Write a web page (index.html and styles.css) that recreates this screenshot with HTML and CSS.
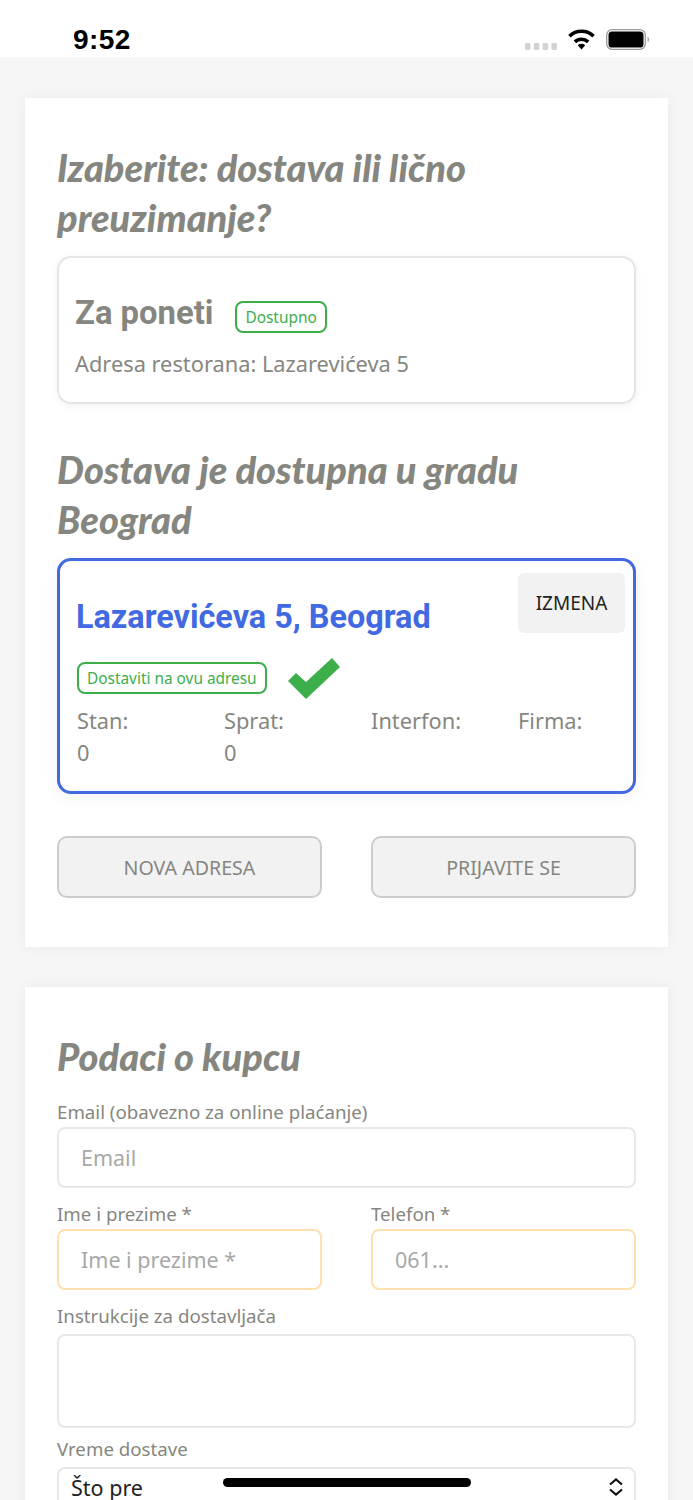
FILE: index.html
```html
<!DOCTYPE html>
<html lang="sr">
<head>
  <meta charset="UTF-8">
  <meta name="viewport" content="width=device-width,initial-scale=1">
  <title>Porudžbina</title>
  <link rel="stylesheet" href="styles.css">
</head>
<body>

  <!-- Status bar -->
  <div class="status">
    <span class="time">9:52</span>
    <div class="status-icons">
      <svg class="signal" width="32" height="7" viewBox="0 0 32 7"><rect x="0" y="0" width="5.500" height="7" rx="1.400"/><rect x="8.800" y="0" width="5.500" height="7" rx="1.400"/><rect x="17.600" y="0" width="5.500" height="7" rx="1.400"/><rect x="26.400" y="0" width="5.500" height="7" rx="1.400"/></svg>
      <svg class="wifi" width="27" height="21" viewBox="0 0 27 21"><path d="M13.500 20.500 9.800 16.200a5.500 5.500 0 0 1 7.400 0z"/><path d="M6.900 12.900a9.600 9.600 0 0 1 13.200 0" fill="none" stroke="#000" stroke-width="3.600"/><path d="M1.500 7.200a17 17 0 0 1 24 0" fill="none" stroke="#000" stroke-width="3.600"/></svg>
      <svg class="battery" width="44" height="21" viewBox="0 0 44 21"><rect x=".7" y=".7" width="38.600" height="19.600" rx="5.500" fill="#fff" stroke="#999" stroke-width="1.300"/><rect x="2.500" y="2.500" width="35" height="16" rx="3.600" fill="#000"/><path d="M41.500 7.500a3.500 3.500 0 0 1 0 6z" fill="#aaa"/></svg>
    </div>
  </div>

  <main class="page">

    <section class="panel">
      <h2>Izaberite: dostava ili lično preuzimanje?</h2>

      <div class="pickup">
        <div class="pickup-head">
          <h3>Za poneti</h3>
          <span class="tag">Dostupno</span>
        </div>
        <p>Adresa restorana: Lazarevićeva 5</p>
      </div>

      <h2 class="second">Dostava je dostupna u gradu Beograd</h2>

      <div class="address">
        <button class="edit">IZMENA</button>
        <h3>Lazarevićeva 5, Beograd</h3>
        <div class="address-tag">
          <span class="tag">Dostaviti na ovu adresu</span>
          <svg class="check" width="52" height="41" viewBox="0 0 52 41"><path d="M0 23 8 15 18 24 44 0 52 9 18 41z"/></svg>
        </div>
        <div class="details">
          <div>Stan:<br>0</div>
          <div>Sprat:<br>0</div>
          <div>Interfon:</div>
          <div>Firma:</div>
        </div>
      </div>

      <div class="actions">
        <button>NOVA ADRESA</button>
        <button>PRIJAVITE SE</button>
      </div>
    </section>

    <section class="panel buyer">
      <h2>Podaci o kupcu</h2>

      <label class="first">Email (obavezno za online plaćanje)</label>
      <input class="field" placeholder="Email">

      <div class="two">
        <div>
          <label>Ime i prezime *</label>
          <input class="field required" placeholder="Ime i prezime *">
        </div>
        <div>
          <label>Telefon *</label>
          <input class="field required" placeholder="061...">
        </div>
      </div>

      <label class="note-label">Instrukcije za dostavljača</label>
      <textarea class="field note"></textarea>

      <label class="time-label">Vreme dostave</label>
      <div class="field select">
        <span>Što pre</span>
        <svg width="16" height="18" viewBox="0 0 16 18"><path d="M2 6.500 8 1.500 14 6.500M2 11.500 8 16.500 14 11.500" fill="none" stroke="#111" stroke-width="2.200"/></svg>
      </div>
    </section>

  </main>

  <div class="home-bar"></div>

</body>
</html>
```

FILE: styles.css
```css
*{margin:0;padding:0;box-sizing:border-box;}
html,body{
  height:1500px;
  overflow:hidden;
}
body{
  position:relative;
  background:#f6f6f6;
  font-family:"Noto Sans",sans-serif;
  color:#868680;
}

/* Status bar */
.status{
  height:57px; background:#fff;
  display:flex; align-items:flex-start; justify-content:space-between;
  padding:0 43px 0 73px;
}
.time{
  font-family:"Liberation Sans",sans-serif;
  font-size:28px; font-weight:bold; line-height:28px;
  color:#000; margin-top:26px; letter-spacing:.4px;
}
.status-icons{display:flex; align-items:flex-start; margin-top:29px;}
.signal{fill:#d2d2d2; margin:14px 11px 0 0;}
.wifi{margin-right:11px;}

.page{padding:41px 25px 0;}

.panel{
  background:#fff;
  padding:44px 32px 49px;
  margin-bottom:40px;
  box-shadow:0 0 12px rgba(0,0,0,.05);
}

h2{
  font-family:Lato,sans-serif;
  font-size:38px; line-height:50px;
  font-style:italic; font-weight:900;
  color:#868680;
}
h2.second{margin-top:40px;}

/* Za poneti */
.pickup{
  height:148px; margin-top:14px;
  padding:39px 16px 0;
  border:2px solid #e6e6e6; border-radius:14px;
  box-shadow:0 2px 8px rgba(0,0,0,.05);
}
.pickup-head{display:flex; align-items:flex-end; gap:22px; height:36px;}
.pickup-head h3{
  font-family:Roboto,sans-serif;
  font-size:32.800px; font-weight:700; color:#868680; line-height:32px;
  align-self:flex-start;
}
.pickup p{font-size:21.800px; line-height:32px; margin-top:15px;}

.tag{
  display:inline-block; height:32px; padding:0 8px;
  border:2px solid #3cae4a; border-radius:8px;
  font-size:15.400px; line-height:29px; color:#3cae4a;
  white-space:nowrap;
}

/* Adresa */
.address{
  position:relative;
  height:236px; margin-top:14px;
  padding:0 17px;
  border:3px solid #4169e1; border-radius:14px;
  box-shadow:0 4px 16px rgba(0,0,0,.05);
}
.address h3{
  font-family:Roboto,sans-serif;
  font-size:32.400px; font-weight:700; line-height:40px;
  color:#4169e1; padding-top:36px; margin-left:-1px;
  white-space:nowrap;
}
.edit{
  position:absolute; top:12px; right:8px;
  width:107px; height:60px;
  background:#f2f2f2; border:none; border-radius:6px;
  font:19px "Noto Sans",sans-serif; color:#222;
}
.address-tag{display:flex; align-items:center; gap:21px; margin-top:21px; height:40px;}
.details{
  display:grid; grid-template-columns:repeat(4,147px);
  font-size:21.800px; line-height:32px; margin-top:7px;
}

.actions{display:grid; grid-template-columns:265px 265px; gap:49px; margin-top:42px;}
.actions button{
  height:62px;
  background:#f2f2f2; border:2px solid #ccc; border-radius:10px;
  font:19.600px "Noto Sans",sans-serif; color:#868680;
}
.check{fill:#3cae4a;}

/* Podaci o kupcu */
.buyer label{display:block; font-size:18.700px; line-height:24px; margin-bottom:3px;}
.buyer .first{margin-top:19px;}
.field{
  display:block; width:100%; height:61px;
  padding:0 22px;
  background:#fff; border:2px solid #e8e8e8; border-radius:8px;
  font:21.500px "Noto Sans",sans-serif; color:#222;
}
.field::placeholder{color:#a8a8a8;}
.required{border-color:#ffe0ae;}
.two{display:grid; grid-template-columns:265px 265px; gap:49px; margin-top:14px;}
.buyer .note-label{margin-top:14px; margin-bottom:6px;}
.note{height:94px; resize:none;}
.buyer .time-label{margin-top:9px; margin-bottom:6px;}
.select{
  display:flex; align-items:center; justify-content:space-between;
  height:40px; padding:0 10px 0 12px;
}
.select svg{flex:none;}

/* Indicador */
.home-bar{
  position:absolute; left:223px; top:1478px;
  width:248px; height:9px;
  background:#000; border-radius:5px;
}
```
